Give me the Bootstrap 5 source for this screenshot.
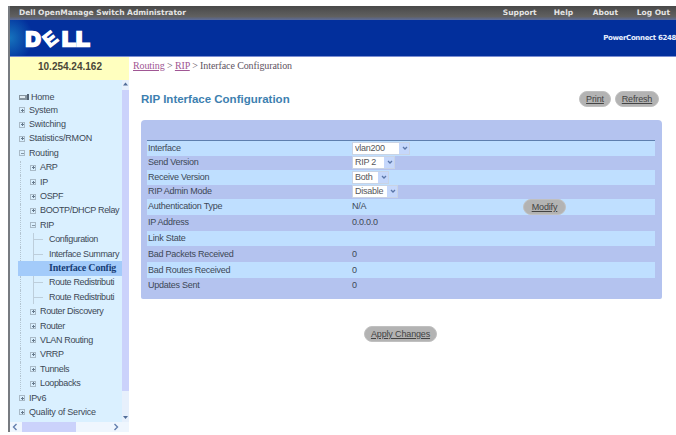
<!DOCTYPE html>
<html lang="en">

<head>
    <meta charset="UTF-8">
    <title>Dell OpenManage Switch Administrator</title>
    <link href="https://cdn.jsdelivr.net/npm/bootstrap@5.3.2/dist/css/bootstrap.min.css" rel="stylesheet">
    <style>
        body {
            width: 676px;
            height: 435px;
            overflow: hidden;
            background: #fff;
            font-family: "Liberation Sans", Arial, sans-serif;
            font-size: 9px;
            line-height: 1;
            color: #3d4856;
            padding: 6px 0 0 8px;
        }

        .window {
            height: 426px;
            border-left: 2px solid #777b80;
        }

        .topbar {
            height: 14px;
            background: linear-gradient(#494949, #606060 75%, #5b6c9d);
            color: #e4e4e4;
            font-family: "DejaVu Sans", Verdana, sans-serif;
            font-weight: bold;
            font-size: 7.5px;
            padding: 0 6px 0 9px;
        }

        .brandbar {
            height: 37px;
            background: radial-gradient(ellipse 23px 25px at 0 50%, #1673bd, #022f9c);
            border-bottom: 1px solid #7b8ed2;
            color: #e8efff;
        }

        .model-name {
            font-family: "DejaVu Sans", Verdana, sans-serif;
            font-weight: bold;
            font-size: 7px;
            letter-spacing: -.35px;
        }

        .sidebar {
            width: 119px;
        }

        .ip-box {
            height: 23px;
            background: #ffffbf;
            font: bold 10px/19px "Liberation Sans", sans-serif;
            color: #494638;
            padding-left: 28px;
        }

        .tree-pane {
            width: 112px;
            background: #daf0ff;
            padding-top: 11px;
            white-space: nowrap;
            letter-spacing: -.2px;
        }

        .tree-row {
            height: 14.4px;
            padding-left: 9px;
            flex-shrink: 0;
        }

        .tree-home {
            height: 12px;
        }

        .level-2 {
            margin-left: 10px;
            border-left: 1px dotted #b3c5d2;
            letter-spacing: -.35px;
        }

        .level-3 {
            margin-left: 10px;
            border-left: 1px dotted #b3c5d2;
            padding-left: 12px;
            letter-spacing: -.35px;
        }

        .level-3::before {
            content: "";
            width: 14px;
            height: 100%;
            border-left: 1px solid #bdcedb;
            background: linear-gradient(#bdcedb, #bdcedb) 0 50% / 9px 1px no-repeat;
            margin-right: 2px;
        }

        .tree-active {
            background: #a3cbfa;
            margin-left: 8px;
            padding-left: 31px;
            font-family: "Liberation Serif", serif;
            font-weight: bold;
            font-size: 10px;
            color: #173e77;
        }

        .knob {
            width: 6px;
            height: 6px;
            flex-shrink: 0;
            border: 1px solid #a9bac7;
            margin-right: 4px;
            background: linear-gradient(#66798b, #66798b) center / 3px 1px no-repeat, linear-gradient(#66798b, #66798b) center / 1px 3px no-repeat;
        }

        .knob-open {
            background: linear-gradient(#8496a5, #8496a5) center / 3px 1px no-repeat;
        }

        .vscroll {
            width: 7px;
            background: linear-gradient(#cbd2fb, #cbd2fb) 0 10px / 100% 301px no-repeat #e7f0fc;
        }

        .hscroll {
            height: 10px;
            background: linear-gradient(#cbd2fb, #cbd2fb) 12px 0 / 54px 100% no-repeat #eff6fe;
        }

        .crumbs {
            font-family: "Liberation Serif", serif;
            font-size: 10px;
            letter-spacing: -.1px;
            color: #605362;
            padding: 4px 0 0 4px;
            height: 23px;
        }

        .crumbs a {
            color: #a05694;
        }

        .page-title {
            font-size: 11.5px;
            font-weight: bold;
            color: #3d7fb0;
            margin: 0;
            line-height: 18px;
        }

        .btn-pill {
            background: #b3b3b3;
            color: #434343;
            border: 1px solid #c0c0c0;
            border-radius: 8px;
            height: 16px;
            padding: 0;
            font-size: 9px;
            line-height: 14px;
            letter-spacing: -.15px;
            text-decoration: underline;
        }

        .panel {
            width: 521px;
            height: 179px;
            background: #b4c3ef;
            border-radius: 4px 4px 2px 2px;
            padding: 20px 7px 0 6px;
        }

        .field-list {
            border-top: 1px solid #5e7fae;
            letter-spacing: -.25px;
        }

        .field {
            height: 14.5px;
        }

        .field:nth-child(odd) {
            background: #bfdfff;
        }

        .field:nth-child(n+5) {
            height: 15.8px;
        }

        .field-name {
            width: 205px;
            padding-left: 1px;
        }

        .form-select {
            height: 13px;
            min-height: 0;
            padding: 0 0 0 2px;
            border: 1px solid #c9d3e4;
            border-radius: 0;
            font-size: 9px;
            line-height: 11px;
            letter-spacing: -.25px;
            color: #55565a;
            background: linear-gradient(90deg, transparent calc(100% - 10px), #c5d7fb 0), #fff;
        }

        .select-wrap svg {
            position: absolute;
            right: 2px;
            top: 4px;
        }
    </style>
</head>

<body>

    <div class="window d-flex flex-column">
        <div class="topbar d-flex align-items-center justify-content-between">
            <span>Dell OpenManage Switch Administrator</span>
            <div class="d-flex">
                <span style="width: 51px">Support</span>
                <span style="width: 39px">Help</span>
                <span style="width: 44px">About</span>
                <span>Log Out</span>
            </div>
        </div>
        <div class="brandbar d-flex align-items-center justify-content-between">
            <svg width="90" height="36" viewBox="0 0 90 36" fill="#fff" stroke="#fff" stroke-width="2.4" font-family="Liberation Sans, sans-serif" font-weight="bold" font-size="21">
                <text transform="translate(15.6 25.8)">D</text>
                <text transform="translate(40.8 18.6) rotate(-38)" x="-7" y="6.5" font-size="19" stroke-width="1.2">E</text>
                <text transform="translate(52 25.8) scale(1.06 1)">L</text>
                <text transform="translate(66 25.8) scale(1.06 1)">L</text>
            </svg>
            <span class="model-name">PowerConnect 6248</span>
        </div>

        <div class="d-flex flex-grow-1">
            <div class="sidebar d-flex flex-column">
                <div class="ip-box">10.254.24.162</div>
                <div class="d-flex flex-grow-1">
                    <div class="tree-pane d-flex flex-column" id="tree"></div>
                    <div class="vscroll d-flex flex-column justify-content-between align-items-center">
                        <svg width="7" height="8" viewBox="0 0 7 8"><path d="M1 5.5 3.5 2.5 6 5.5z" fill="#526d99"/></svg>
                        <svg width="7" height="8" viewBox="0 0 7 8"><path d="M1 2 3.5 5 6 2z" fill="#526d99"/></svg>
                    </div>
                </div>
                <div class="hscroll d-flex justify-content-between align-items-center pe-2">
                    <svg width="10" height="8" viewBox="0 0 10 8" fill="none" stroke="#647fae" stroke-width="1.4"><path d="M6.5 1 3.5 4l3 3"/></svg>
                    <svg width="10" height="8" viewBox="0 0 10 8" fill="none" stroke="#647fae" stroke-width="1.4"><path d="M3.5 1l3 3-3 3"/></svg>
                </div>
            </div>

            <div class="flex-grow-1">
                <div class="crumbs"><a href="#">Routing</a> &gt; <a href="#">RIP</a> &gt; Interface Configuration</div>
                <div style="padding: 10px 0 0 12px">
                    <div class="d-flex justify-content-between align-items-center" style="width: 518px; height: 18px; margin-bottom: 12px">
                        <h1 class="page-title">RIP Interface Configuration</h1>
                        <div class="d-flex" style="gap: 4px">
                            <button class="btn btn-pill" style="width: 32px">Print</button>
                            <button class="btn btn-pill" style="width: 44px">Refresh</button>
                        </div>
                    </div>
                    <div class="panel">
                        <div class="field-list" id="fields"></div>
                    </div>
                    <button class="btn btn-pill d-block" style="width: 73px; margin: 27px 0 0 223px">Apply Changes</button>
                </div>
            </div>
        </div>
    </div>

    <script src="https://cdn.jsdelivr.net/npm/bootstrap@5.3.2/dist/js/bootstrap.bundle.min.js"></script>
    <script>
        // [level, label, state], long labels are shortened to the pane width
        const treeItems = [
            [0, 'Home', ''],
            [1, 'System', 'closed'],
            [1, 'Switching', 'closed'],
            [1, 'Statistics/RMON', 'closed'],
            [1, 'Routing', 'open'],
            [2, 'ARP', 'closed'],
            [2, 'IP', 'closed'],
            [2, 'OSPF', 'closed'],
            [2, 'BOOTP/DHCP Relay', 'closed'],
            [2, 'RIP', 'open'],
            [3, 'Configuration', ''],
            [3, 'Interface Summary', ''],
            [3, 'Interface Config', 'active'],
            [3, 'Route Redistributi', ''],
            [3, 'Route Redistributi', ''],
            [2, 'Router Discovery', 'closed'],
            [2, 'Router', 'closed'],
            [2, 'VLAN Routing', 'closed'],
            [2, 'VRRP', 'closed'],
            [2, 'Tunnels', 'closed'],
            [2, 'Loopbacks', 'closed'],
            [1, 'IPv6', 'closed'],
            [1, 'Quality of Service', 'closed']
        ];

        // name, value, select width
        const fields = [
            ['Interface', 'vlan200', 58],
            ['Send Version', 'RIP 2', 43],
            ['Receive Version', 'Both', 37],
            ['RIP Admin Mode', 'Disable', 46],
            ['Authentication Type', 'N/A'],
            ['IP Address', '0.0.0.0'],
            ['Link State', ''],
            ['Bad Packets Received', '0'],
            ['Bad Routes Received', '0'],
            ['Updates Sent', '0']
        ];

        const homeIcon = '<svg width="12" height="7" viewBox="0 0 12 7"><path d="M0 1h8v5H0z" fill="#8796a1"/><path d="M1 2h5v2H1z" fill="#dfebf2"/><path d="M8 0h2v6H8z" fill="#536475"/></svg>';

        document.getElementById('tree').innerHTML = treeItems.map(([level, label, state]) => {
            const active = state === 'active';
            const cls = active ? 'tree-active' : level === 0 ? 'tree-home' : 'level-' + level;
            let icon = '';
            if (level === 0) icon = homeIcon;
            else if (state && !active) icon = `<span class="knob ${state === 'open' ? 'knob-open' : ''}"></span>`;
            return `<div class="tree-row d-flex align-items-center ${cls}">${icon}<span>${label}</span></div>`;
        }).join('');

        document.getElementById('fields').innerHTML = fields.map(([name, value, width]) => {
            const cell = width
                ? `<div class="select-wrap position-relative" style="width: ${width}px"><select class="form-select"><option>${value}</option></select><svg width="6" height="5" viewBox="0 0 6 5"><path d="M1 1l2 2 2-2" fill="none" stroke="#5b76a8" stroke-width="1.3"/></svg></div>`
                : `<span style="width: 171px">${value}</span>`;
            const modify = name === 'Authentication Type' ? '<button class="btn btn-pill" style="width: 43px">Modify</button>' : '';
            return `<div class="field d-flex align-items-center"><span class="field-name">${name}</span>${cell}${modify}</div>`;
        }).join('');
    </script>

</body>

</html>
